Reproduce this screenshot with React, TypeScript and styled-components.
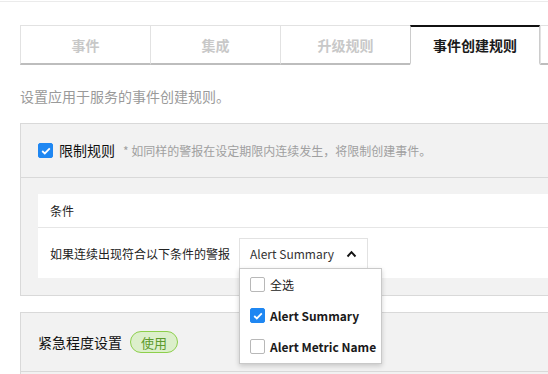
import styled, { createGlobalStyle } from "styled-components";

const GlobalStyle = createGlobalStyle`
  html, body {
    margin: 0;
    padding: 0;
    background: #ffffff;
    overflow: hidden;
  }
  body {
    font-family: "Noto Sans CJK SC", "Noto Sans", sans-serif;
    color: #222222;
  }
`;

const Page = styled.div`
  width: 720px;
  padding-top: 1px;
`;

const TopRule = styled.div`
  border-top: 1px solid #ebebeb;
`;

const Content = styled.div`
  padding: 23px 0 0 20px;
`;

const TabRow = styled.div`
  display: flex;
`;

const Tab = styled.div<{ active?: boolean }>`
  width: 130px;
  height: 40px;
  box-sizing: border-box;
  display: flex;
  align-items: center;
  justify-content: center;
  font-size: 14px;
  font-weight: 700;
  background: #ffffff;
  color: ${({ active }) => (active ? "#1a1a1a" : "#c8c8c8")};
  border-top: ${({ active }) => (active ? "2px solid #111111" : "1px solid #e2e2e2")};
  border-left: 1px solid ${({ active }) => (active ? "#cccccc" : "#e2e2e2")};
  border-right: ${({ active }) => (active ? "1px solid #cccccc" : "none")};
  border-bottom: ${({ active }) => (active ? "2px solid #ffffff" : "2px solid #bdbdbd")};
  padding-top: ${({ active }) => (active ? "0" : "1px")};
`;

const Subtitle = styled.p`
  margin: 22px 0 0;
  font-size: 14px;
  line-height: 18px;
  color: #9a9a9a;
`;

const Panel = styled.section<{ gap: number }>`
  margin-top: ${({ gap }) => gap}px;
  background: #f2f2f2;
  border: 1px solid #d9d9d9;
  border-right: none;
`;

const PanelHeader = styled.div`
  display: flex;
  align-items: center;
  gap: 6px;
  padding: 18px 17px;
  border-bottom: 1px solid #d9d9d9;
  font-size: 14px;
  line-height: 17px;
`;

const HeaderTitle = styled.span`
  color: #111111;
`;

const Note = styled.span`
  margin-left: 2px;
  font-size: 12px;
  color: #a0a0a0;
`;

const PanelBody = styled.div`
  padding: 16px 0 17px 17px;
`;

const InnerCard = styled.div`
  background: #ffffff;
`;

const CardRow = styled.div<{ divided?: boolean }>`
  display: flex;
  align-items: center;
  gap: 9px;
  padding: ${({ divided }) => (divided ? "0 12px" : "10px 12px 9px")};
  height: ${({ divided }) => (divided ? "34px" : "auto")};
  box-sizing: border-box;
  border-bottom: ${({ divided }) => (divided ? "1px solid #e6e6e6" : "none")};
  font-size: 12px;
  color: #222222;
`;

const SelectBox = styled.div`
  position: relative;
  width: 129px;
  height: 31px;
  box-sizing: border-box;
  border: 1px solid #e2e2e2;
  background: #ffffff;
  display: flex;
  align-items: center;
  justify-content: space-between;
  padding: 0 10px 0 10px;
  font-size: 12px;
  color: #333333;
`;

const Menu = styled.div`
  position: absolute;
  top: 100%;
  left: -1px;
  width: 143px;
  box-sizing: border-box;
  background: #ffffff;
  border: 1px solid #c9c9c9;
  box-shadow: 0 2px 5px rgba(0, 0, 0, 0.18);
  padding: 0 0 1px;
  z-index: 2;
`;

const MenuItem = styled.div<{ bold?: boolean }>`
  height: 31px;
  display: flex;
  align-items: center;
  gap: 5px;
  padding-left: 10px;
  font-size: 12px;
  font-weight: ${({ bold }) => (bold ? 700 : 400)};
  color: #1a1a1a;
  white-space: nowrap;
`;

const Box = styled.span<{ checked?: boolean }>`
  width: 15px;
  height: 15px;
  box-sizing: border-box;
  flex: none;
  border-radius: 2px;
  display: inline-flex;
  align-items: center;
  justify-content: center;
  background: ${({ checked }) => (checked ? "#1f87f2" : "#ffffff")};
  border: 1px solid ${({ checked }) => (checked ? "#1f87f2" : "#b8b8b8")};
`;

const Badge = styled.span`
  margin-left: 2px;
  height: 22px;
  box-sizing: border-box;
  padding: 0 10px;
  border-radius: 11px;
  border: 1px solid #8dcf4c;
  background: #dcefcb;
  color: #5c9a2e;
  font-size: 13px;
  display: inline-flex;
  align-items: center;
`;

const Checkbox = ({ checked }: { checked?: boolean }) => (
  <Box checked={checked}>
    {checked && (
      <svg width="10" height="8" viewBox="0 0 10 8">
        <polyline points="1.2,4 3.8,6.4 8.8,1.4" fill="none" stroke="#ffffff" strokeWidth="1.8" />
      </svg>
    )}
  </Box>
);

const tabs = ["事件", "集成", "升级规则", "事件创建规则", ""];

const options = [
  { label: "全选", checked: false, bold: false },
  { label: "Alert Summary", checked: true, bold: true },
  { label: "Alert Metric Name", checked: false, bold: true },
];

export default function App() {
  return (
    <>
      <GlobalStyle />
      <Page>
        <TopRule />
        <Content>
          <TabRow>
            {tabs.map((t, i) => (
              <Tab key={i} active={t === "事件创建规则"}>
                {t}
              </Tab>
            ))}
          </TabRow>
          <Subtitle>设置应用于服务的事件创建规则。</Subtitle>

          <Panel gap={18}>
            <PanelHeader>
              <Checkbox checked />
              <HeaderTitle>限制规则</HeaderTitle>
              <Note>* 如同样的警报在设定期限内连续发生，将限制创建事件。</Note>
            </PanelHeader>
            <PanelBody>
              <InnerCard>
                <CardRow divided>条件</CardRow>
                <CardRow>
                  <span>如果连续出现符合以下条件的警报</span>
                  <SelectBox>
                    <span>Alert Summary</span>
                    <svg width="11" height="8" viewBox="0 0 11 8">
                      <polyline points="1.5,6.5 5.5,2.2 9.5,6.5" fill="none" stroke="#111111" strokeWidth="1.9" />
                    </svg>
                    <Menu>
                      {options.map((o) => (
                        <MenuItem key={o.label} bold={o.bold}>
                          <Checkbox checked={o.checked} />
                          {o.label}
                        </MenuItem>
                      ))}
                    </Menu>
                  </SelectBox>
                </CardRow>
              </InnerCard>
            </PanelBody>
          </Panel>

          <Panel gap={16}>
            <PanelHeader>
              <HeaderTitle>紧急程度设置</HeaderTitle>
              <Badge>使用</Badge>
            </PanelHeader>
            <PanelBody />
          </Panel>
        </Content>
      </Page>
    </>
  );
}
